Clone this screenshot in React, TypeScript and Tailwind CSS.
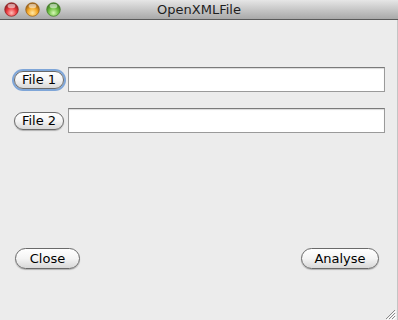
import React from 'react';

const font = { fontFamily: '"Lucida Grande", "DejaVu Sans", sans-serif' };

function Light({ base, light, dark }: { base: string; light: string; dark: string }) {
  const id = `g-${base.replace('#', '')}`;
  return (
    <svg width="15" height="15" viewBox="0 0 15 15">
      <defs>
        <radialGradient id={id} cx="50%" cy="75%" r="65%">
          <stop offset="0%" stopColor={light} />
          <stop offset="55%" stopColor={base} />
          <stop offset="100%" stopColor={dark} />
        </radialGradient>
      </defs>
      <circle cx="7.5" cy="7.5" r="6.8" fill={`url(#${id})`} stroke={dark} strokeWidth="0.7" />
      <ellipse cx="7.5" cy="4" rx="3.9" ry="2.3" fill="#fff" opacity="0.55" />
    </svg>
  );
}

function PillButton({ label, focused, className }: { label: string; focused?: boolean; className?: string }) {
  return (
    <button
      className={`flex items-center justify-center rounded-full border border-[#6a6a6a] bg-gradient-to-b from-white via-[#f4f4f4] to-[#d8d8d8] text-[13px] text-black leading-none ${
        focused ? 'shadow-[0_0_0_2px_#7fa6d8]' : 'shadow-[0_1px_1px_rgba(0,0,0,0.25)]'
      } ${className ?? ''}`}
      style={font}
    >
      {label}
    </button>
  );
}

function FileRow({ label, focused }: { label: string; focused?: boolean }) {
  return (
    <div className="flex items-center gap-[4px] pl-[14px] pr-[12px]">
      <PillButton label={label} focused={focused} className="h-[18px] w-[50px]" />
      <div className="h-[25px] flex-1 border border-[#9a9a9a] border-t-[#7a7a7a] bg-white shadow-[inset_0_1px_1px_rgba(0,0,0,0.15)]" />
    </div>
  );
}

export default function App() {
  return (
    <div className="relative flex h-[320px] w-[398px] flex-col overflow-hidden bg-[#ececec]" style={font}>
      {/* title bar */}
      <div className="relative flex h-[20px] items-center border-b border-[#5a5a5a] bg-gradient-to-b from-[#e6e6e6] to-[#a9a9a9]">
        <div className="flex items-center gap-[6px] pl-[4px]">
          <Light base="#ec3a3e" light="#ffc0b8" dark="#8e1d1f" />
          <Light base="#f5a928" light="#ffe9a8" dark="#9a5d10" />
          <Light base="#6fc143" light="#d8f8b8" dark="#3d7a22" />
        </div>
        <div className="absolute inset-0 flex items-center justify-center text-[13px] text-[#1e1e1e]">
          OpenXMLFile
        </div>
      </div>

      {/* body */}
      <div className="flex flex-1 flex-col border-r border-[#c4c4c4] pt-[47px]">
        <div className="flex flex-col gap-[16px]">
          <FileRow label="File 1" focused />
          <FileRow label="File 2" />
        </div>
        <div className="mt-[115px] flex items-center justify-between pl-[15px] pr-[18px]">
          <PillButton label="Close" className="h-[21px] w-[65px]" />
          <PillButton label="Analyse" className="h-[21px] w-[78px]" />
        </div>
      </div>

      {/* resize grip */}
      <svg className="absolute bottom-0 right-[2px]" width="12" height="12" viewBox="0 0 12 12">
        <path d="M11 2 L2 11 M11 5 L5 11 M11 8 L8 11" stroke="#8a8a8a" strokeWidth="1" />
        <path d="M12 3 L3 12 M12 6 L6 12 M12 9 L9 12" stroke="#fff" strokeWidth="1" />
      </svg>
    </div>
  );
}
